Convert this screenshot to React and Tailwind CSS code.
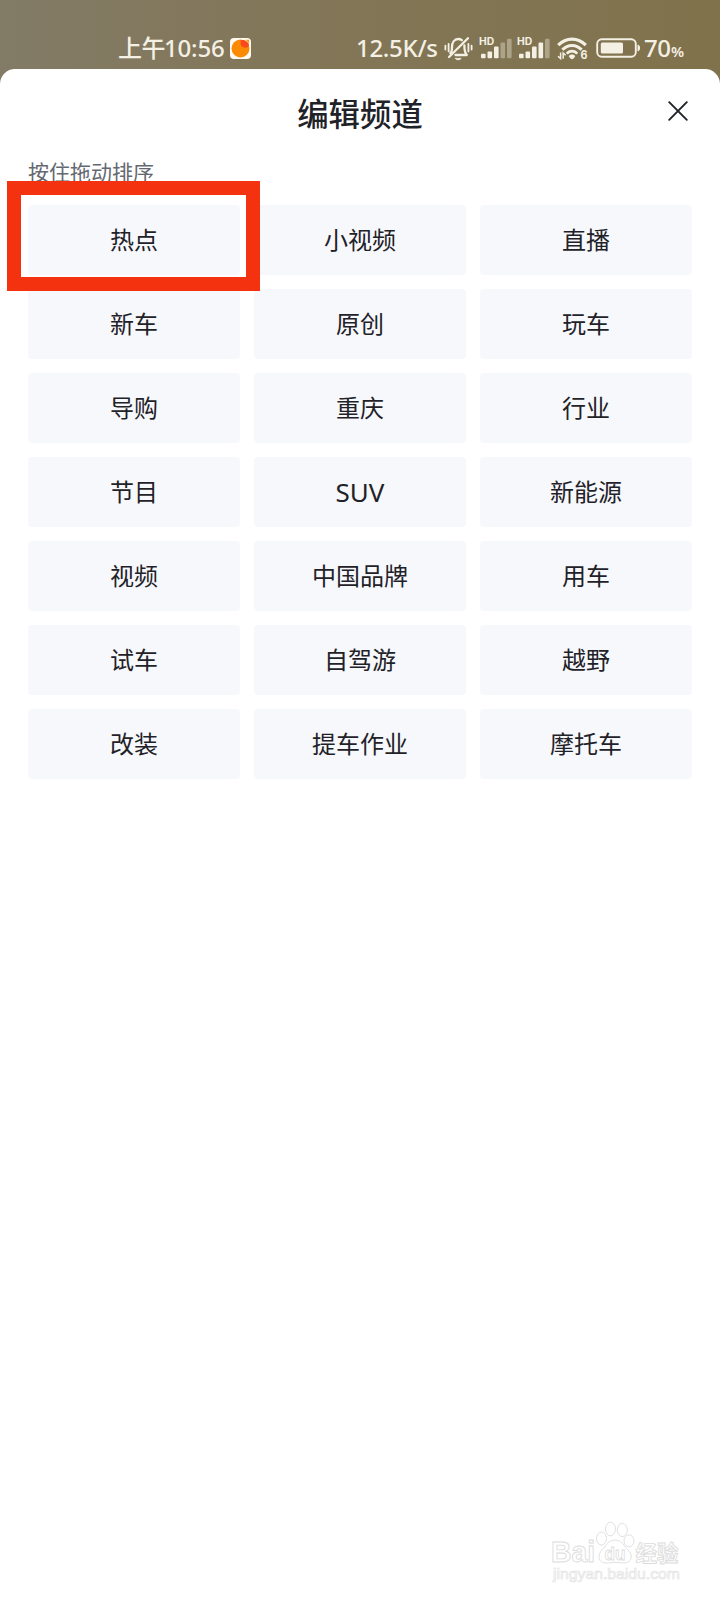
const channels = [
  '热点', '小视频', '直播',
  '新车', '原创', '玩车',
  '导购', '重庆', '行业',
  '节目', 'SUV', '新能源',
  '视频', '中国品牌', '用车',
  '试车', '自驾游', '越野',
  '改装', '提车作业', '摩托车',
];

function AppBadge() {
  return (
    <svg className="h-[21px] w-[21px] shrink-0" viewBox="0 0 21 21">
      <rect width="21" height="21" rx="4" fill="#fffaf2" />
      <circle cx="10.5" cy="10.5" r="9" fill="#fb8a05" />
      <path d="M10.6 2.4C13 1 18.4 3 19 7.2C17.4 11.4 10.6 10 10.6 5.6Z" fill="#fb4a1d" />
      <path d="M15.2 1.8H19V6.4C18.3 4.4 17 2.8 15.2 1.8Z" fill="#fb9a15" />
    </svg>
  );
}

function MutedBell() {
  return (
    <svg className="h-[25px] w-[29px] shrink-0" viewBox="0 0 29 25" fill="none" stroke="#f4f0e4" strokeWidth="2.3" strokeLinecap="round" strokeLinejoin="round">
      <path d="M6.4 17.2C8.2 15.6 8 14 8 11C8 6.5 10.3 3 14.2 3C15.6 3 16.8 3.4 17.8 4.2" />
      <path d="M20.4 9.4C20.4 14 20.2 16 22.8 19H11.5" />
      <path d="M24 2.2L5 21" />
      <path d="M11.4 22.4H17C16.4 24.2 12 24.2 11.4 22.4Z" fill="#f4f0e4" strokeWidth="0.8" />
      <path d="M4.6 8V15.4M1.4 9.6V13.6M24.4 8V15.4M27.6 9.6V13.6" strokeWidth="1.8" />
    </svg>
  );
}

function Signal({ strong }) {
  return (
    <svg className="h-[24px] w-[33px] shrink-0 overflow-visible" viewBox="0 0 33 24" fill="#f4f0e4">
      <text x="0" y="9.4" fontSize="9.8" fontWeight="700" fontFamily="Inter, sans-serif" textLength="15.2" lengthAdjust="spacingAndGlyphs">HD</text>
      <rect x="2" y="17.8" width="4.6" height="4.4" rx="1" />
      <rect x="8.5" y="15.4" width="4.6" height="6.8" rx="1" />
      <rect x="15" y="10.4" width="4.6" height="11.8" rx="1" />
      <rect x="21.5" y="6.6" width="4.6" height="15.6" rx="1" opacity={strong ? 1 : 0.38} />
      <rect x="28" y="2.8" width="4.6" height="19.4" rx="1" opacity="0.38" />
    </svg>
  );
}

function Wifi() {
  return (
    <svg className="h-[24px] w-[31px] shrink-0 overflow-visible" viewBox="0 0 31 24" fill="none" stroke="#f4f0e4">
      <path d="M1.2 9.2C9 1.1 21 1.1 28.8 9.2" strokeWidth="3.1" />
      <path d="M5.4 13.7C10.8 8 19.2 8 24.6 13.7" strokeWidth="3.1" />
      <path d="M9.8 17.8C12.6 14.2 17.4 14.2 20.2 17.8" strokeWidth="2.6" />
      <path d="M11.8 20.2C12.4 17.8 17.6 17.8 18.2 20.2C17.6 21.6 16 23.2 15 23.2C14 23.2 12.4 21.6 11.8 20.2Z" fill="#f4f0e4" stroke="none" />
      <path d="M3.6 16.6V22.6L1 20.2M6.2 22.8V17L8.6 19.2" strokeWidth="1.5" />
      <text x="23.6" y="23" fontSize="11.5" fontWeight="700" fontFamily="Inter, sans-serif" fill="#f4f0e4" stroke="none" textLength="7" lengthAdjust="spacingAndGlyphs">6</text>
    </svg>
  );
}

function Battery() {
  return (
    <svg className="h-[20px] w-[45px] shrink-0" viewBox="0 0 45 20">
      <rect x="1.2" y="1.3" width="38.6" height="17.4" rx="4.5" fill="none" stroke="#f4f0e4" strokeWidth="1.9" />
      <rect x="4.8" y="4.6" width="22.2" height="11" rx="1.5" fill="#f4f0e4" />
      <path d="M42 7C44 7.4 44 12.6 42 13Z" fill="#f4f0e4" stroke="#f4f0e4" />
    </svg>
  );
}

function StatusBar() {
  return (
    <div className="flex h-[68px] items-center pt-[28px] pl-[118px] whitespace-nowrap text-[#f4f0e4]">
      <div className="flex w-[239px] items-center text-[24px] leading-[36px]">
        <span className="w-[46px] pb-[2px] font-medium tracking-[-0.5px]">上午</span>
        <span className="w-[66px] font-['Noto_Sans',sans-serif] text-[24px] font-medium tracking-[-0.2px]">10:56</span>
        <AppBadge />
      </div>
      <span className="-ml-[1px] w-[84px] font-['Noto_Sans',sans-serif] text-[24px] leading-[36px] font-medium tracking-[-0.3px]">12.5K/s</span>
      <div className="ml-[4px] flex items-center">
        <MutedBell />
        <div className="ml-[6px] flex gap-[5px]">
          <Signal />
          <Signal strong />
        </div>
        <div className="ml-[7px]"><Wifi /></div>
        <div className="ml-[8px]"><Battery /></div>
      </div>
      <div className="ml-[3px] flex items-baseline pt-[2px] font-['Noto_Sans',sans-serif] leading-[36px]">
        <span className="w-[27px] text-[24px] font-medium tracking-[-0.4px]">70</span>
        <span className="text-[15px] font-semibold">%</span>
      </div>
    </div>
  );
}

function Watermark() {
  return (
    <svg className="mr-[36px] h-[70px] w-[134px] overflow-visible" viewBox="0 0 134 70" fill="#ffffff" stroke="#dcdcdc" strokeWidth="0.9">
      <g fontFamily="Liberation Sans, sans-serif" fontWeight="700">
        <text x="1" y="42" fontSize="29.5" textLength="44" lengthAdjust="spacingAndGlyphs">Bai</text>
        <ellipse cx="51.5" cy="18.5" rx="5" ry="6.5" />
        <ellipse cx="60.5" cy="9" rx="5" ry="6.8" />
        <ellipse cx="72.3" cy="10" rx="5" ry="6.6" />
        <ellipse cx="79" cy="20.8" rx="5" ry="6" />
        <path d="M65 20C72 20 74 26 78 30C84 36 81 43 74 43C70 43 68 42.4 65 42.4C62 42.4 60 43 56 43C48 43 47 35 52 30C56 26 58 20 65 20Z" />
        <text x="54.5" y="39.5" fontSize="19" textLength="21" lengthAdjust="spacingAndGlyphs" strokeWidth="0.8">du</text>
        <text x="85.5" y="40.5" fontSize="22" fontFamily="Noto Sans CJK SC, sans-serif" textLength="43" lengthAdjust="spacingAndGlyphs">经验</text>
      </g>
      <text x="3" y="58.5" fontSize="15.5" fontFamily="Liberation Sans, sans-serif" textLength="127" lengthAdjust="spacingAndGlyphs" fill="#ffffff" stroke="#e3e3e3" strokeWidth="0.7">jingyan.baidu.com</text>
    </svg>
  );
}

export default function App() {
  return (
    <div className="flex h-[1600px] w-[720px] flex-col overflow-hidden bg-linear-to-r from-[#827b66] via-[#83775a] via-35% to-[#80724b] font-['Noto_Sans_CJK_SC',sans-serif]">
      <StatusBar />
      <main className="mt-[0.5px] flex flex-1 flex-col rounded-t-[15px] bg-white px-[28px] pt-[0.5px] text-[#1f2228]">
        <header className="grid h-[90px] grid-cols-[1fr_auto_1fr] items-center">
          <h1 className="col-start-2 mb-[2px] text-[31.4px] leading-[40px] font-medium">编辑频道</h1>
          <button type="button" aria-label="关闭" className="mr-[4px] mb-[7px] justify-self-end">
            <svg className="h-[20px] w-[20px]" viewBox="0 0 20 20" fill="none" stroke="#1f2228" strokeWidth="1.9" strokeLinecap="round">
              <path d="M1.2 1.2L18.8 18.8M18.8 1.2L1.2 18.8" />
            </svg>
          </button>
        </header>
        <p className="-mt-[2px] h-[48px] text-[21px] leading-[28px] text-[#646870]">按住拖动排序</p>
        <div className="relative grid grid-cols-3 gap-[14px]">
          {channels.map((name) => (
            <button
              key={name}
              type="button"
              className={
                name === 'SUV'
                  ? "h-[70px] rounded-[4px] bg-[#f7f8fc] pb-[1px] font-['Noto_Sans',sans-serif] text-[26px] leading-[36px]"
                  : 'h-[70px] rounded-[4px] bg-[#f7f8fc] pb-[3px] text-[24px] leading-[36px]'
              }
            >
              {name}
            </button>
          ))}
          <div className="pointer-events-none absolute -top-[24px] -left-[21px] h-[110px] w-[253px] border-[14px] border-[#f53210]" />
        </div>
        <div className="-mr-[28px] mt-auto flex justify-end pb-[10px]">
          <Watermark />
        </div>
      </main>
    </div>
  );
}
